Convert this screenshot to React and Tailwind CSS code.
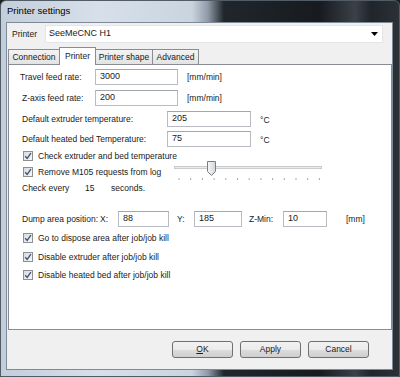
import React from "react";

const ui = "font-['Liberation_Sans',Arial,sans-serif] text-[8.5px] text-[#1a1a1a]";

function TextBox({ value, w }) {
  return (
    <div
      className="h-[16px] border border-[#b8bbc1] border-t-[#a3a6ac] bg-white flex items-center pl-[4px] text-[9px]"
      style={{ width: w }}
    >
      {value}
    </div>
  );
}

function Check({ label }) {
  return (
    <div className="flex items-center h-[12px]">
      <span className="w-[10px] h-[10px] border border-[#8e8f8f] bg-[linear-gradient(135deg,#d9dadb,#f7f7f7)] flex items-center justify-center">
        <svg width="8" height="8" viewBox="0 0 8 8">
          <path d="M1.2 4.2 L3.2 6.4 L6.9 1.2" stroke="#3d4f7c" strokeWidth="1.3" fill="none" />
        </svg>
      </span>
      <span className="ml-[5px]">{label}</span>
    </div>
  );
}

function Slider() {
  const ticks = Array.from({ length: 13 }, (_, i) => 5 + i * 11.7);
  return (
    <svg width="150" height="24" viewBox="0 0 150 24">
      <rect x="0.5" y="6.5" width="147" height="2" fill="#e9ebec" stroke="#c9cbcd" />
      <defs>
        <linearGradient id="th" x1="0" x2="1" y1="0" y2="0">
          <stop offset="0" stopColor="#f7f7f7" />
          <stop offset="1" stopColor="#d4d6d8" />
        </linearGradient>
      </defs>
      <path d="M33.5 1.5 H41.5 V11.5 L37.5 15.5 L33.5 11.5 Z" fill="url(#th)" stroke="#7b7e82" />
      {ticks.map((x) => (
        <line key={x} x1={x} x2={x} y1="18" y2="20" stroke="#a4a6a8" />
      ))}
    </svg>
  );
}

function Tab({ label, w, active }) {
  return (
    <div
      className={
        active
          ? "h-[18px] bg-white border border-[#898c95] border-b-0 -mb-px z-10 -ml-px flex items-center justify-center relative"
          : "h-[15px] bg-[linear-gradient(#f3f3f3,#e3e3e3)] border border-[#898c95] border-b-0 -ml-px first:ml-0 flex items-center justify-center"
      }
      style={{ width: w }}
    >
      {label}
    </div>
  );
}

function Button({ children }) {
  return (
    <div className="w-[61px] h-[17px] rounded-[3px] border border-[#707070] bg-[linear-gradient(#f2f2f2_0%,#ebebeb_50%,#dddddd_51%,#cfcfcf_100%)] flex items-center justify-center">
      {children}
    </div>
  );
}

export default function App() {
  return (
    <div className="w-[400px] h-[377px] bg-[#1b2025] overflow-hidden">
      <div
        className={`w-[400px] h-[377px] rounded-t-[6px] border border-[#525c66] flex flex-col bg-[linear-gradient(90deg,#c3cedb_0%,#d7e0ea_25%,#c9d4df_48%,#8e9aa7_52%,#20262c_56%,#171b20_80%,#3b4149_89%,#20252b_93%,#2b3137_100%)] ${ui}`}
      >
        <div className="h-[21px] flex items-center pl-[6px] text-[9.5px] text-black">Printer settings</div>
        <div className="flex-1 ml-[5px] mr-[6px] mb-[6px] border border-[#7d8a98] bg-[#f0f0f0] flex flex-col">
          {/* printer combo */}
          <div className="flex items-center mt-[2px] ml-[5px]">
            <span className="w-[33px]">Printer</span>
            <div className="w-[338px] h-[18px] bg-white border border-[#e3e5e8] flex items-center pl-[3px] text-[9px]">
              <span className="flex-1">SeeMeCNC H1</span>
              <svg width="7" height="4" viewBox="0 0 7 4" className="mr-[4px]">
                <path d="M0 0 H7 L3.5 4 Z" fill="#000" />
              </svg>
            </div>
          </div>

          {/* tabs */}
          <div className="flex items-end mt-[3px] ml-[1px] h-[18px]">
            <Tab label="Connection" w={52} />
            <Tab label="Printer" w={37} active />
            <Tab label="Printer shape" w={58} />
            <Tab label="Advanced" w={47} />
          </div>

          {/* panel */}
          <div className="ml-[1px] w-[384px] h-[266px] bg-white border border-[#898c95] flex flex-col">
            <div className="flex items-center mt-[4px] ml-[11px]">
              <span className="w-[75px]">Travel feed rate:</span>
              <TextBox value="3000" w={83} />
              <span className="ml-[9px]">[mm/min]</span>
            </div>
            <div className="flex items-center mt-[5px] ml-[13px]">
              <span className="w-[73px]">Z-axis feed rate:</span>
              <TextBox value="200" w={83} />
              <span className="ml-[9px]">[mm/min]</span>
            </div>
            <div className="flex items-center mt-[5px] ml-[13px]">
              <span className="w-[145px]">Default extruder temperature:</span>
              <TextBox value="205" w={84} />
              <span className="ml-[9px] mt-[2px]">°C</span>
            </div>
            <div className="flex items-center mt-[4px] ml-[13px]">
              <span className="w-[145px]">Default heated bed Temperature:</span>
              <TextBox value="75" w={84} />
              <span className="ml-[9px] mt-[2px]">°C</span>
            </div>
            <div className="mt-[3px] ml-[14px]">
              <Check label="Check extruder and bed temperature" />
            </div>
            <div className="flex mt-[4px]">
              <div className="flex flex-col w-[165px]">
                <div className="ml-[14px]">
                  <Check label="Remove M105 requests from log" />
                </div>
                <div className="flex items-center h-[12px] mt-[4px] ml-[13px]">
                  <span className="w-[63px]">Check every</span>
                  <span className="w-[26px]">15</span>
                  <span>seconds.</span>
                </div>
              </div>
              <div className="-mt-[6px]">
                <Slider />
              </div>
            </div>
            <div className="flex items-center mt-[17px] ml-[13px]">
              <span className="w-[78px]">Dump area position:</span>
              <span className="w-[18px]">X:</span>
              <TextBox value="88" w={51} />
              <span className="ml-[8px] w-[17px]">Y:</span>
              <TextBox value="185" w={48} />
              <span className="ml-[7px] w-[34px]">Z-Min:</span>
              <TextBox value="10" w={44} />
              <span className="ml-[19px]">[mm]</span>
            </div>
            <div className="mt-[5px] ml-[14px]">
              <Check label="Go to dispose area after job/job kill" />
            </div>
            <div className="mt-[7px] ml-[14px]">
              <Check label="Disable extruder after job/job kill" />
            </div>
            <div className="mt-[6px] ml-[14px]">
              <Check label="Disable heated bed after job/job kill" />
            </div>
          </div>

          {/* buttons */}
          <div className="flex justify-end gap-[7px] mt-[11px] mr-[23px]">
            <Button>
              <span className="underline">O</span>K
            </Button>
            <Button>Apply</Button>
            <Button>Cancel</Button>
          </div>
        </div>
      </div>
    </div>
  );
}
